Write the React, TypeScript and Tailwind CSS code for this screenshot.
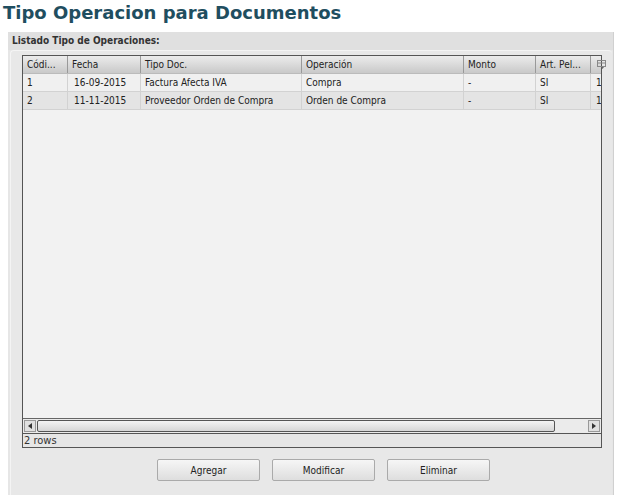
import React from "react";

const columns = [
  { label: "Códi...", w: "w-[45px]" },
  { label: "Fecha", w: "w-[73px]" },
  { label: "Tipo Doc.", w: "w-[161px]" },
  { label: "Operación", w: "w-[162px]" },
  { label: "Monto", w: "w-[72px]" },
  { label: "Art. Pel...", w: "w-[55px]" },
];

const rows = [
  ["1", "16-09-2015", "Factura Afecta IVA", "Compra", "-", "SI", "1"],
  ["2", "11-11-2015", "Proveedor Orden de Compra", "Orden de Compra", "-", "SI", "1"],
];

const widths = ["w-[45px]", "w-[73px]", "w-[161px]", "w-[162px]", "w-[72px]", "w-[55px]"];

const App = () => {
  return (
    <div className="w-[619px] h-[499px] bg-white font-['DejaVu_Sans_Condensed','DejaVu_Sans',sans-serif] overflow-hidden">
      <h1 className="pl-[3px] pt-[1px] h-[32px] font-['DejaVu_Sans',sans-serif] text-[18px] leading-[24px] font-bold text-[#1f4e60]">
        Tipo Operacion para Documentos
      </h1>
      <div className="ml-[8px] w-[606px] h-[463px] bg-[#e6e6e6] border-r border-[#d0d0d0] flex flex-col">
        <div className="h-[18px] pl-[4px] text-[10px] leading-[18px] font-bold text-[#333] bg-[#e0e0e0]">
          Listado Tipo de Operaciones:
        </div>
        <div className="ml-[2px] mr-[1px] flex-1 rounded-t-[4px] border-t border-l border-[#f4f4f4] bg-[#e8e8e8] flex flex-col">
          <div className="mt-[4px] ml-[11px] w-[580px] h-[393px] border border-[#555] bg-[#f2f2f2] flex flex-col text-[10px] text-[#222]">
            <div className="flex h-[18px] bg-gradient-to-b from-[#ececec] to-[#c9c9c9] border-b border-[#bbb]">
              {columns.map((c) => (
                <div key={c.label} className={`${c.w} shrink-0 pl-[4px] leading-[17px] border-r border-[#999] whitespace-nowrap`}>
                  {c.label}
                </div>
              ))}
              <div className="flex-1 flex items-center pl-[6px]">
                <svg width="9" height="9" viewBox="0 0 9 9">
                  <rect x="0.5" y="0.5" width="8" height="6" fill="none" stroke="#888" />
                  <line x1="0.5" y1="3" x2="8.5" y2="3" stroke="#888" />
                  <path d="M4 7 L7 7 L5.5 9 Z" fill="#666" />
                </svg>
              </div>
            </div>
            {rows.map((r, i) => (
              <div key={i} className={`flex h-[18px] border-b border-[#d2d2d2] ${i % 2 === 0 ? "bg-[#f0f0f0]" : "bg-[#e4e4e4]"}`}>
                {widths.map((w, j) => (
                  <div key={j} className={`${w} shrink-0 leading-[17px] border-r border-[#d2d2d2] whitespace-nowrap ${j === 1 ? "pl-[6px]" : "pl-[4px]"}`}>
                    {r[j]}
                  </div>
                ))}
                <div className="flex-1 pl-[5px] leading-[17px] overflow-hidden">{r[6]}</div>
              </div>
            ))}
            <div className="flex-1" />
            <div className="h-[15px] flex items-center border-t border-[#666] bg-[#ebebeb] px-[1px]">
              <div className="w-[12px] h-[12px] border border-[#999] bg-[#e0e0e0] flex items-center justify-center">
                <svg width="4" height="6" viewBox="0 0 4 6"><path d="M4 0 L0 3 L4 6 Z" fill="#333" /></svg>
              </div>
              <div className="ml-[1px] w-[518px] h-[12px] rounded-[2px] border border-[#555] bg-gradient-to-b from-[#f4f4f4] to-[#d6d6d6]" />
              <div className="flex-1" />
              <div className="w-[12px] h-[12px] border border-[#999] bg-[#e0e0e0] flex items-center justify-center">
                <svg width="4" height="6" viewBox="0 0 4 6"><path d="M0 0 L4 3 L0 6 Z" fill="#333" /></svg>
              </div>
            </div>
            <div className="h-[14px] border-t border-[#555] bg-[#e6e6e6] pl-[1px] text-[11px] leading-[13px] text-[#333]">
              2 rows
            </div>
          </div>
          <div className="mt-[11px] pl-[24px] flex justify-center gap-[12px] text-[10px] text-[#222]">
            {["Agregar", "Modificar", "Eliminar"].map((b) => (
              <button key={b} className="w-[103px] h-[22px] border border-[#aaa] rounded-[2px] bg-gradient-to-b from-[#f6f6f6] to-[#dedede]">
                {b}
              </button>
            ))}
          </div>
        </div>
      </div>
    </div>
  );
};

export default App;
